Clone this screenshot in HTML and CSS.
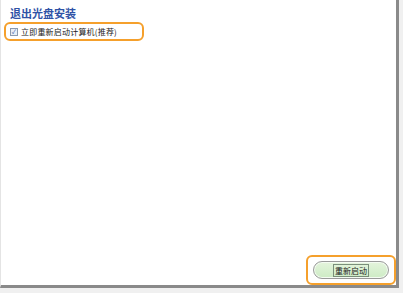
FILE: index.html
```html
<!DOCTYPE html>
<html lang="zh-CN">
<head>
    <meta charset="UTF-8">
    <title>退出光盘安装</title>
    <link rel="stylesheet" href="styles.css">
</head>
<body>
<div class="frame">
    <div class="page">
        <h1 class="title">退出光盘安装</h1>
        <div class="option hl">
            <label class="check"><span class="box">&#10003;</span>立即重新启动计算机(推荐)</label>
        </div>
        <div class="spacer"></div>
        <div class="foot">
            <div class="hl btn-wrap">
                <button class="btn"><span class="focus">重新启动</span></button>
            </div>
        </div>
    </div>
</div>
</body>
</html>
```

FILE: styles.css
```css
html, body, div, h1 {
    margin: 0;
    padding: 0;
}

body {
    width: 403px;
    height: 293px;
    background: #f0f0f0;
    font: 8px "Noto Sans CJK SC", "Liberation Sans", sans-serif;
    color: #222;
}

.frame {
    width: 403px;
    height: 293px;
    box-sizing: border-box;
    padding-right: 4px;
    padding-bottom: 5px;
}

.page {
    display: flex;
    flex-direction: column;
    height: 100%;
    box-sizing: border-box;
    background: #fff;
    border-left: 1px solid #e4e4e4;
    border-right: 3px solid #8a8a8a;
    border-bottom: 3px solid #8a8a8a;
    padding: 6px 0 0 3px;
}

.title {
    font-size: 11px;
    font-weight: bold;
    color: #2f52a6;
    line-height: 14px;
    padding-left: 6px;
}

.hl {
    border: 2px solid #f5a02c;
    border-radius: 6px;
}

.option {
    align-self: flex-start;
    margin-top: 2px;
    padding: 2px 25px 2px 4px;
}

.check {
    display: flex;
    align-items: center;
    gap: 3px;
    line-height: 11px;
    letter-spacing: 0.2px;
}

.box {
    width: 6px;
    height: 6px;
    border: 1px solid #8a9ab0;
    background: #e8eef8;
    color: #2d4f9e;
    font-size: 6px;
    line-height: 6px;
    text-align: center;
}

.spacer {
    flex: 1;
}

.foot {
    display: flex;
    justify-content: flex-end;
}

.btn-wrap {
    padding: 4px 5px;
}

.btn {
    display: block;
    width: 76px;
    height: 18px;
    border: 1px solid #9a9a9a;
    border-radius: 9px;
    background: linear-gradient(#e4f4dc, #cdebc4);
    box-shadow: inset 0 0 0 1px #f4fbf2;
    font: 8px "Noto Sans CJK SC", sans-serif;
    color: #222;
    padding: 0;
}

.focus {
    border: 1px solid #7a8f7a;
    padding: 0 1px;
}
```
